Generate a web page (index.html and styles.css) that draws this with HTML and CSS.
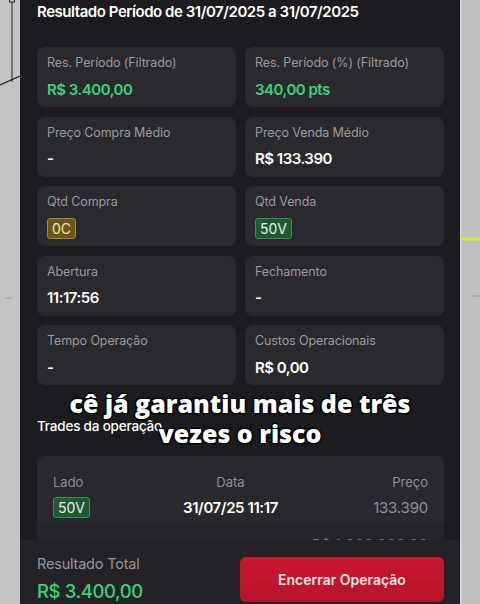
FILE: index.html
```html
<!DOCTYPE html>
<html>
<head>
    <title>Resultado Período</title>
    <link rel="stylesheet" href="styles.css">
</head>
<body>

<div class="stage">

    <!-- chart behind the sheet, left side -->
    <div class="gutter gutter-left">
        <svg width="20" height="604" viewBox="0 0 20 604">
            <rect x="9.5" y="-2" width="5" height="4" fill="none" stroke="#222" stroke-width="1"/>
            <line x1="12" y1="2" x2="12" y2="82" stroke="#222" stroke-width="1"/>
            <line x1="0" y1="85" x2="20" y2="76" stroke="#222" stroke-width="1.2"/>
            <line x1="5" y1="298" x2="12" y2="298" stroke="#999" stroke-width="1"/>
        </svg>
    </div>

    <!-- sheet -->
    <div class="sheet">
        <div class="sheet-body">
            <h1 class="sheet-title">Resultado Período de 31/07/2025 a 31/07/2025</h1>

            <div class="stats">
                <div class="stat">
                    <span class="stat-label">Res. Período (Filtrado)</span>
                    <span class="stat-value positive">R$ 3.400,00</span>
                </div>
                <div class="stat">
                    <span class="stat-label">Res. Período (%) (Filtrado)</span>
                    <span class="stat-value positive">340,00 pts</span>
                </div>
                <div class="stat">
                    <span class="stat-label">Preço Compra Médio</span>
                    <span class="stat-value">-</span>
                </div>
                <div class="stat">
                    <span class="stat-label">Preço Venda Médio</span>
                    <span class="stat-value">R$ 133.390</span>
                </div>
                <div class="stat">
                    <span class="stat-label">Qtd Compra</span>
                    <span class="stat-value"><span class="badge badge-buy">0C</span></span>
                </div>
                <div class="stat">
                    <span class="stat-label">Qtd Venda</span>
                    <span class="stat-value"><span class="badge badge-sell">50V</span></span>
                </div>
                <div class="stat">
                    <span class="stat-label">Abertura</span>
                    <span class="stat-value">11:17:56</span>
                </div>
                <div class="stat">
                    <span class="stat-label">Fechamento</span>
                    <span class="stat-value">-</span>
                </div>
                <div class="stat">
                    <span class="stat-label">Tempo Operação</span>
                    <span class="stat-value">-</span>
                </div>
                <div class="stat">
                    <span class="stat-label">Custos Operacionais</span>
                    <span class="stat-value">R$ 0,00</span>
                </div>
            </div>

            <h2 class="section-title">Trades da operação</h2>

            <div class="trades">
                <div class="trade-row trade-head">
                    <span>Lado</span>
                    <span class="center">Data</span>
                    <span class="right">Preço</span>
                </div>
                <div class="trade-row">
                    <span><span class="badge badge-sell">50V</span></span>
                    <span class="center trade-date">31/07/25 11:17</span>
                    <span class="right trade-price">133.390</span>
                </div>
                <div class="trade-extra">
                    <span>R$ 1.000.000,00</span>
                </div>
            </div>
        </div>

        <!-- footer -->
        <div class="sheet-footer">
            <div class="total">
                <span class="total-label">Resultado Total</span>
                <span class="total-value">R$ 3.400,00</span>
            </div>
            <button class="close-button">Encerrar Operação</button>
        </div>

        <!-- video caption over the sheet -->
        <div class="caption">cê já garantiu mais de três<br>vezes o risco</div>
    </div>

    <!-- chart behind the sheet, right side -->
    <div class="gutter gutter-right">
        <svg width="20" height="604" viewBox="0 0 20 604">
            <rect x="0" y="0" width="2" height="604" fill="#cfcfd1"/>
            <line x1="0" y1="239" x2="20" y2="239" stroke="#d9ec3a" stroke-width="3"/>
            <line x1="12" y1="296" x2="20" y2="296" stroke="#999" stroke-width="1"/>
        </svg>
    </div>

</div>

</body>
</html>
```

FILE: styles.css
```css
        html, body {
            margin: 0;
            padding: 0;
        }

        body {
            width: 480px;
            height: 604px;
            overflow: hidden;
            background-color: #c4c4c6;
            font-family: Inter, "Noto Sans", sans-serif;
            color: #ffffff;
        }

        .stage {
            display: flex;
            height: 604px;
        }

        .gutter {
            width: 20px;
            flex-shrink: 0;
        }

        .gutter svg {
            display: block;
        }

        .gutter-right {
            background-color: #bfbfc1;
        }

        .sheet {
            position: relative;
            width: 440px;
            display: flex;
            flex-direction: column;
            background-color: #1c1b1f;
        }

        .sheet-body {
            flex: 1;
            overflow: hidden;
            padding: 2px 16px 0 17px;
        }

        .sheet-title {
            margin: 0 0 25px 0;
            font-size: 15px;
            line-height: 20px;
            font-weight: 600;
            letter-spacing: -0.45px;
        }

        /* stat cards */
        .stats {
            display: grid;
            grid-template-columns: 1fr 1fr;
            column-gap: 9px;
            row-gap: 9.5px;
        }

        .stat {
            display: flex;
            flex-direction: column;
            gap: 8px;
            padding: 8px 10px;
            background-color: #2a292d;
            border-radius: 8px;
        }

        .stat-label {
            font-size: 12.5px;
            line-height: 16px;
            letter-spacing: -0.1px;
            color: #9b9a9f;
        }

        .stat-value {
            display: flex;
            align-items: center;
            height: 20px;
            font-size: 15px;
            font-weight: 600;
            letter-spacing: -0.5px;
        }

        .positive {
            color: #35d57a;
        }

        .badge {
            display: inline-block;
            padding: 0 4px;
            font-size: 14px;
            line-height: 19px;
            font-weight: 400;
            letter-spacing: 0;
            border-radius: 3px;
            border: 1px solid;
        }

        .badge-buy {
            background-color: #6a5712;
            border-color: #a18b2b;
            color: #f1e4b0;
        }

        .badge-sell {
            background-color: #1d5a31;
            border-color: #3b8f52;
            color: #e4f5e8;
        }

        .section-title {
            margin: 32px 0 21px 0;
            font-size: 13.5px;
            line-height: 18px;
            font-weight: 500;
            letter-spacing: -0.2px;
        }

        /* trades table */
        .trades {
            background-color: #29282c;
            border-radius: 8px;
            padding-top: 17px;
        }

        .trade-row {
            display: grid;
            grid-template-columns: 0.92fr 1fr 1.08fr;
            align-items: center;
            padding: 0 16px;
        }

        .trade-head {
            font-size: 13px;
            line-height: 18px;
            color: #8f8e93;
            margin-bottom: 6px;
        }

        .center {
            text-align: center;
        }

        .right {
            text-align: right;
        }

        .trade-date {
            font-size: 15px;
            font-weight: 600;
            letter-spacing: -0.4px;
        }

        .trade-price {
            font-size: 15px;
            color: #8f8e93;
            letter-spacing: -0.2px;
        }

        .trade-extra {
            margin-top: 7px;
            padding: 10px 16px 0 0;
            background-color: #252428;
            text-align: right;
            font-size: 15px;
            color: #77767b;
            height: 40px;
        }

        /* footer */
        .sheet-footer {
            height: 64px;
            flex-shrink: 0;
            display: flex;
            align-items: center;
            justify-content: space-between;
            padding: 0 16px 0 17px;
            background-color: #232226;
        }

        .total {
            display: flex;
            flex-direction: column;
            gap: 6px;
            padding-top: 14px;
        }

        .total-label {
            font-size: 14.5px;
            line-height: 18px;
            color: #97969b;
            letter-spacing: -0.2px;
        }

        .total-value {
            font-size: 18.5px;
            line-height: 24px;
            font-weight: 500;
            letter-spacing: -0.4px;
            color: #35d57a;
        }

        .close-button {
            width: 204px;
            height: 45px;
            margin-top: 15px;
            border: none;
            border-radius: 6px;
            background: linear-gradient(#c8182f, #b8132a);
            color: #f4e6e8;
            font-family: Inter, "Noto Sans", sans-serif;
            font-size: 14px;
            font-weight: 600;
        }

        .caption {
            position: absolute;
            left: 0;
            right: 0;
            top: 388px;
            text-align: center;
            font-family: "Open Sans", sans-serif;
            font-size: 25px;
            line-height: 30px;
            font-weight: 800;
            color: #ffffff;
            text-shadow: 0 0 2px #000, 1px 1px 1px #000, -1px -1px 1px #000, 1px -1px 1px #000, -1px 1px 1px #000;
        }
```
